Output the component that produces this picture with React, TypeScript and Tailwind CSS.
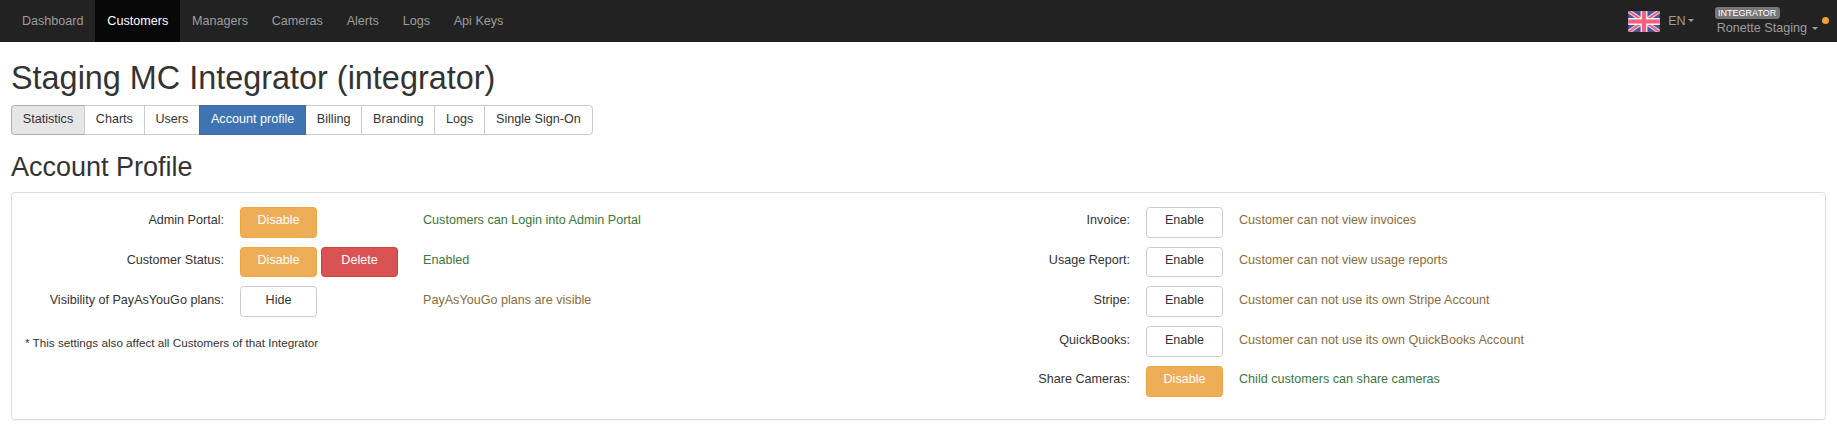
import React from "react";

const navItems = ["Dashboard", "Customers", "Managers", "Cameras", "Alerts", "Logs", "Api Keys"];
const tabs = ["Statistics", "Charts", "Users", "Account profile", "Billing", "Branding", "Logs", "Single Sign-On"];

type Tone = "warn" | "danger" | "plain";

function Btn({ tone, children }: { tone: Tone; children: React.ReactNode }) {
  const cls =
    tone === "warn"
      ? "bg-[#eead57] border-[#eca745] text-white"
      : tone === "danger"
        ? "bg-[#d95254] border-[#d43f3a] text-white"
        : "bg-white border-[#cccccc] text-[#333333]";
  return (
    <button className={`w-[77px] h-full shrink-0 flex items-center justify-center pb-[3px] rounded-[3.6px] border ${cls}`}>
      {children}
    </button>
  );
}

function Row({ label, status, good, labelW, gapW, children }: { label: string; status: string; good: boolean; labelW: string; gapW: string; children: React.ReactNode }) {
  return (
    <div className="flex items-center h-[30.6px] mb-[9.15px]">
      <div className={`${labelW} shrink-0 text-right text-[#333333] pb-[3px]`}>{label}</div>
      <div className={`${gapW} h-full shrink-0 flex gap-[4px] ml-[16px]`}>{children}</div>
      <div className={`pb-[3px] ${good ? "text-[#3c763d]" : "text-[#8a6d3b]"}`}>{status}</div>
    </div>
  );
}

function Flag() {
  return (
    <svg width="32" height="21" viewBox="0 0 60 40" className="rounded-[2px]">
      <rect width="60" height="40" fill="#4f5399" />
      <path d="M0 0L60 40M60 0L0 40" stroke="#dcdce8" strokeWidth="8" />
      <path d="M0 0L60 40M60 0L0 40" stroke="#ef5f7c" strokeWidth="4" />
      <path d="M30 0V40M0 20H60" stroke="#f0f0f4" strokeWidth="13" />
      <path d="M30 0V40M0 20H60" stroke="#f2607c" strokeWidth="8" />
    </svg>
  );
}

function Caret({ color }: { color: string }) {
  return <span className={`inline-block w-0 h-0 border-x-[3.6px] border-x-transparent border-t-[3.6px] ${color}`} />;
}

export default function App() {
  return (
    <div className="min-h-[428px] bg-white text-[12.6px] text-[#333333] font-['Liberation_Sans',Arial,sans-serif] overflow-hidden">
      <nav className="h-[42px] bg-[#222222] flex items-stretch pl-[10px]">
        {navItems.map((n) =>
          n === "Customers" ? (
            <div key={n} className="px-[11.9px] flex items-center bg-[#080808] text-white">{n}</div>
          ) : (
            <div key={n} className="px-[11.9px] flex items-center text-[#9d9d9d]">{n}</div>
          )
        )}
        <div className="ml-auto flex items-center pr-[19px] text-[#9d9d9d]">
          <Flag />
          <span className="ml-[8px]">EN</span>
          <span className="ml-[2px] mb-[1px] flex"><Caret color="border-t-[#9d9d9d]" /></span>
          <div className="ml-[23px] flex flex-col relative">
            <span className="w-[65px] h-[12px] -ml-[2px] flex items-center justify-center rounded-[3px] bg-[#777777] text-[9px] text-white leading-none">INTEGRATOR</span>
            <span className="flex items-center gap-[5px] mt-[2px] leading-[14px]">Ronette Staging <Caret color="border-t-[#9d9d9d]" /></span>
            <span className="absolute right-[-11px] top-[10px] w-[7px] h-[7px] rounded-full bg-[#f0a030]" />
          </div>
        </div>
      </nav>

      <div className="px-[11px]">
        <h1 className="text-[32.4px] leading-[36px] mt-[18px] text-[#333333]">Staging MC Integrator (integrator)</h1>

        <div className="flex mt-[9px] h-[30px] w-fit">
          {tabs.map((t, i) => {
            const active = t === "Account profile";
            const first = i === 0;
            const last = i === tabs.length - 1;
            return (
              <div
                key={t + i}
                className={`px-[10.8px] pb-[2px] flex items-center border ${i > 0 ? "-ml-px" : ""} ${first ? "rounded-l-[3.6px] bg-[#e6e6e6] border-[#adadad]" : active ? "bg-[#3f74b2] border-[#3a6da8] text-white z-10" : "bg-white border-[#cccccc]"} ${last ? "rounded-r-[3.6px]" : ""}`}
              >
                {t}
              </div>
            );
          })}
        </div>

        <h2 className="text-[27px] leading-[30px] mt-[17px] text-[#333333]">Account Profile</h2>

        <div className="mt-[10px] h-[228px] border border-[#dddddd] rounded-[3.6px] shadow-[0_1px_1px_rgba(0,0,0,0.05)] flex pt-[14px]">
          <div className="w-[907px] shrink-0">
            <Row label="Admin Portal:" status="Customers can Login into Admin Portal" good labelW="w-[212px]" gapW="w-[183px]">
              <Btn tone="warn">Disable</Btn>
            </Row>
            <Row label="Customer Status:" status="Enabled" good labelW="w-[212px]" gapW="w-[183px]">
              <Btn tone="warn">Disable</Btn>
              <Btn tone="danger">Delete</Btn>
            </Row>
            <Row label="Visibility of PayAsYouGo plans:" status="PayAsYouGo plans are visible" good={false} labelW="w-[212px]" gapW="w-[183px]">
              <Btn tone="plain">Hide</Btn>
            </Row>
            <p className="mt-[18px] ml-[13px] text-[11.7px] leading-[16px]">* This settings also affect all Customers of that Integrator</p>
          </div>
          <div className="flex-1">
            <Row label="Invoice:" status="Customer can not view invoices" good={false} labelW="w-[211px]" gapW="w-[93px]">
              <Btn tone="plain">Enable</Btn>
            </Row>
            <Row label="Usage Report:" status="Customer can not view usage reports" good={false} labelW="w-[211px]" gapW="w-[93px]">
              <Btn tone="plain">Enable</Btn>
            </Row>
            <Row label="Stripe:" status="Customer can not use its own Stripe Account" good={false} labelW="w-[211px]" gapW="w-[93px]">
              <Btn tone="plain">Enable</Btn>
            </Row>
            <Row label="QuickBooks:" status="Customer can not use its own QuickBooks Account" good={false} labelW="w-[211px]" gapW="w-[93px]">
              <Btn tone="plain">Enable</Btn>
            </Row>
            <Row label="Share Cameras:" status="Child customers can share cameras" good labelW="w-[211px]" gapW="w-[93px]">
              <Btn tone="warn">Disable</Btn>
            </Row>
          </div>
        </div>
      </div>
    </div>
  );
}
